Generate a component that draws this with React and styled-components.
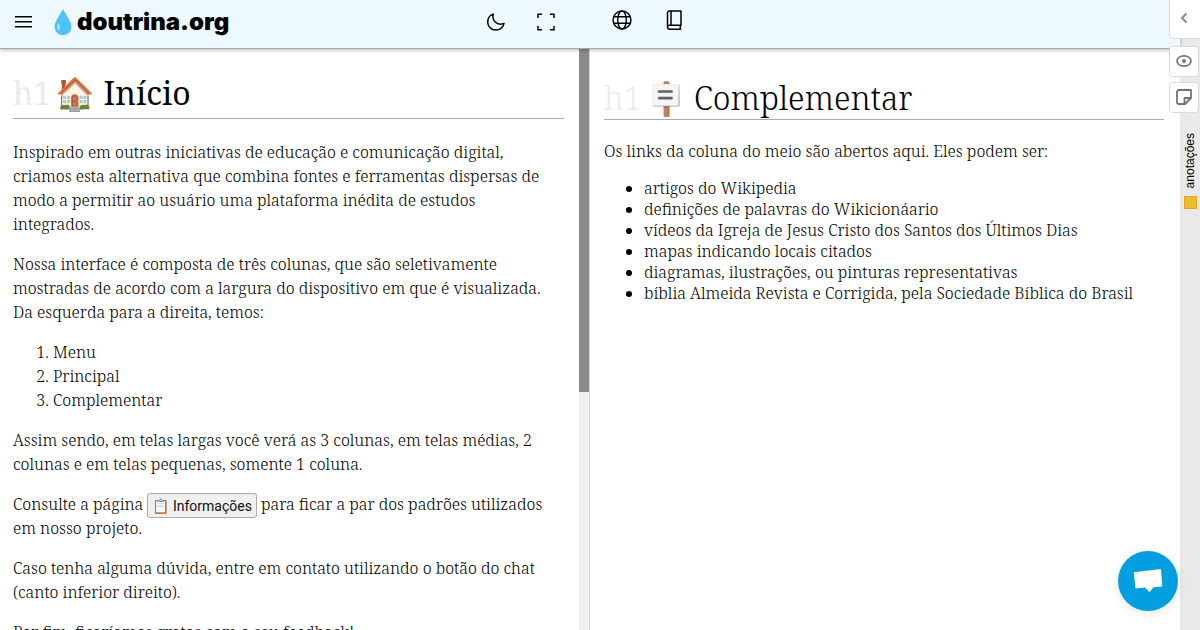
import React from "react";
import styled, { createGlobalStyle } from "styled-components";

const GlobalStyle = createGlobalStyle`
  *, *::before, *::after { box-sizing: border-box; }
  html, body, #root { height: 100%; }
  body {
    margin: 0;
    overflow: hidden;
    background: #fff;
    color: #000;
    font: 300 16px/24px "Roboto Slab", "Noto Serif", "DejaVu Serif Condensed", serif;
  }
`;

const Page = styled.div`
  position: relative;
  display: grid;
  grid-template-columns: minmax(0, 1fr) 20px;
  height: 100%;
`;

const Site = styled.div`
  display: flex;
  flex-direction: column;
  min-height: 0;
`;

const Header = styled.header`
  position: relative;
  z-index: 1;
  display: grid;
  grid-template-columns: 1fr 1fr;
  flex: none;
  height: 49px;
  background: #edf8ff;
  border-bottom: 1px solid #a4aaab;
  box-shadow: 0 1px 4px rgba(0, 0, 0, 0.3);
`;

const MainTools = styled.div`
  display: flex;
  align-items: center;
  gap: 18px;
  padding: 0 34px 4px 15px;
`;

const ViewTools = styled.div`
  display: flex;
  gap: 30px;
`;

const SideTools = styled.div`
  display: flex;
  align-items: center;
  gap: 33px;
  padding: 0 20px 8px 22px;
`;

const IconButton = styled.button`
  display: flex;
  flex: none;
  padding: 0;
  border: 0;
  background: none;
  color: #000;
  cursor: pointer;
`;

const Brand = styled.a`
  display: flex;
  align-items: center;
  margin: 0 auto 0 4px;
  gap: 5px;
  color: #000;
  font: 900 24px/32px Inter, sans-serif;
  text-decoration: none;
`;

const Columns = styled.div`
  display: grid;
  grid-template-columns: 1fr 1fr;
  flex: 1;
  min-height: 0;
`;

const MainColumn = styled.main`
  display: flex;
  min-width: 0;
  min-height: 0;
  border-right: 1px solid #d4d4d4;
`;

const Article = styled.article`
  flex: 1;
  min-width: 0;
  overflow: hidden;
  padding: 18px 15px 0 13px;
`;

const ScrollTrack = styled.div`
  flex: none;
  width: 10px;
  background: #f0f0f0;
`;

const ScrollThumb = styled.div`
  height: 59%;
  background: #8a8a8a;
`;

const SideColumn = styled.section`
  min-width: 0;
  overflow: hidden;
  padding: 18px 16px 0 14px;
  line-height: 21px;
`;

const Heading = styled.h1`
  display: flex;
  align-items: ${(p) => (p.$low ? "flex-end" : "center")};
  gap: 4px;
  height: ${(p) => (p.$low ? 53 : 52)}px;
  margin: 0 0 21px;
  border-bottom: 1px solid #aaa;
  font-size: 32px;
  font-weight: ${(p) => (p.$low ? 300 : 400)};
  line-height: 42px;
`;

const Level = styled.span`
  color: #ebebeb;
`;

const Paragraph = styled.p`
  margin: 0 0 16px;
`;

const NumberedList = styled.ol`
  margin: 0 0 16px;
  padding-left: 40px;
`;

const BulletList = styled.ul`
  margin: 0;
  padding-left: 40px;
`;

const InfoButton = styled.button`
  height: 25px;
  margin: -2px 0;
  padding: 0 4px;
  border: 1px solid #aaa;
  border-radius: 3px;
  background: #f0f0f0;
  color: #111;
  font: 400 14px/20px Roboto, sans-serif;
  vertical-align: middle;
  cursor: pointer;
`;

const NotesRail = styled.aside`
  display: flex;
  flex-direction: column;
  align-items: center;
  gap: 8px;
  padding-top: 133px;
  background: #e9e9e9;
`;

const RailLabel = styled.span`
  writing-mode: vertical-rl;
  transform: rotate(180deg);
  font: 400 12px/18px "Liberation Sans", sans-serif;
`;

const NoteMark = styled.span`
  width: 13px;
  height: 13px;
  border: 1px solid #eaa416;
  background: #ecbd2d;
`;

const NoteTools = styled.div`
  position: absolute;
  top: 0;
  right: 0;
  z-index: 2;
  display: flex;
  flex-direction: column;
  align-items: flex-start;
  width: 31px;
`;

const NoteTool = styled.button`
  display: flex;
  align-items: center;
  justify-content: center;
  width: ${(p) => (p.$tab ? 31 : 30)}px;
  height: ${(p) => (p.$tab ? 39 : 31)}px;
  margin-bottom: ${(p) => (p.$tab ? 7 : 5)}px;
  padding: ${(p) => (p.$tab ? "0 2px 2px 0" : "0 0 1px")};
  border: 1px solid #dbdbdb;
  border-width: ${(p) => (p.$tab ? "0 0 1px 1px" : "1px")};
  border-radius: ${(p) => (p.$tab ? "0 0 0 4px" : "4px")};
  background: #fff;
  color: #737373;
  cursor: pointer;
`;

const ChatButton = styled.button`
  position: absolute;
  right: 22px;
  bottom: 19px;
  z-index: 2;
  display: flex;
  align-items: center;
  justify-content: center;
  width: 60px;
  height: 60px;
  padding: 0;
  border: 0;
  border-radius: 50%;
  background: #039fe0;
  box-shadow: 0 2px 12px rgba(0, 0, 0, 0.1);
  cursor: pointer;
`;

const MenuIcon = () => (
  <svg width="17" height="14" viewBox="0 0 17 14" fill="none" stroke="currentColor" strokeWidth="1.4">
    <path d="M0 1.7h17M0 6.7h17M0 11.7h17" />
  </svg>
);

const DropIcon = () => (
  <svg width="18" height="28" viewBox="0 0 18 28">
    <path d="M9 .8C7.3 5.7.6 12.8.6 18.8.6 23.8 4.3 27.2 9 27.2s8.4-3.4 8.4-8.4C17.4 12.8 10.7 5.7 9 .8Z" fill="#4fc3f7" />
    <path d="M4.2 15.3c-1.7 2.9-1.2 6 .9 7.400 1.400-.8 1.100-5.500-.9-7.400Z" fill="#b3e5fc" />
  </svg>
);

const MoonIcon = () => (
  <svg width="20" height="20" viewBox="0 0 20 20" fill="none" stroke="currentColor" strokeWidth="1.5" strokeLinejoin="round">
    <path d="M7.300 2.100c-1.900 5.700 3.300 12.100 10.800 9.300C17 15.300 13.700 18 9.700 18 5.200 18 1.700 14.500 1.700 10c0-3.500 2.200-6.800 5.600-7.900Z" />
  </svg>
);

const FullscreenIcon = () => (
  <svg width="20" height="20" viewBox="0 0 20 20" fill="none" stroke="currentColor" strokeWidth="1.5">
    <path d="M2 6V2.200h4M14 2.200h4V6M18 14v3.800h-4M6 17.800H2V14" />
  </svg>
);

const GlobeIcon = () => (
  <svg width="20" height="20" viewBox="0 0 20 20" fill="none" stroke="currentColor" strokeWidth="1.4">
    <circle cx="10" cy="10" r="9" />
    <ellipse cx="10" cy="10" rx="4.3" ry="9" />
    <path d="M1.900 6.800h16.200M1.900 13.200h16.200" />
  </svg>
);

const BookIcon = () => (
  <svg width="18" height="20" viewBox="0 0 18 20" fill="none" stroke="currentColor" strokeWidth="1.5" strokeLinejoin="round">
    <path d="M16 15.300H4.500a2 2 0 0 0 0 4H16M2.500 17.300V3a2 2 0 0 1 2-2H16v14.300c-1 1.200-1 2.800 0 4M6 1v14.300" />
  </svg>
);

const ChevronIcon = () => (
  <svg width="8" height="12" viewBox="0 0 8 12" fill="none" stroke="#8b8b8b" strokeWidth="2">
    <path d="M6.500 1.500 2 6l4.500 4.500" />
  </svg>
);

const EyeIcon = () => (
  <svg width="16" height="14" viewBox="0 0 16 14" fill="none" stroke="currentColor" strokeWidth="1.7">
    <path d="M8 1.800c4 0 7 2.400 7 5.200s-3 5.200-7 5.200S1 9.800 1 7s3-5.200 7-5.200Z" />
    <circle cx="8" cy="7" r="1.9" fill="currentColor" stroke="none" />
  </svg>
);

const NoteIcon = () => (
  <svg width="16" height="16" viewBox="0 0 16 16" fill="none" stroke="currentColor" strokeWidth="1.8" strokeLinejoin="round">
    <path d="M15 1H3a2 2 0 0 0-2 2v10a2 2 0 0 0 2 2h6l6-6V1ZM8.500 14.500V9H15" />
  </svg>
);

const ChatIcon = () => (
  <svg width="30" height="26" viewBox="0 0 30 26">
    <path d="M.8 4.200 28 1l1.200 17.400-8.600.8-4.300 5-4.200-4.600-9.600.9Z" fill="#fff" />
  </svg>
);

export default function App() {
  return (
    <>
      <GlobalStyle />
      <Page>
        <Site>
          <Header>
            <MainTools>
              <IconButton aria-label="Menu"><MenuIcon /></IconButton>
              <Brand href="#inicio"><DropIcon />doutrina.org</Brand>
              <ViewTools>
                <IconButton aria-label="Modo noturno"><MoonIcon /></IconButton>
                <IconButton aria-label="Tela cheia"><FullscreenIcon /></IconButton>
              </ViewTools>
            </MainTools>
            <SideTools>
              <IconButton aria-label="Idioma"><GlobeIcon /></IconButton>
              <IconButton aria-label="Livros"><BookIcon /></IconButton>
            </SideTools>
          </Header>
          <Columns>
            <MainColumn>
              <Article id="inicio">
                <Heading><Level>h1</Level><span>🏠 Início</span></Heading>
                <Paragraph>
                  Inspirado em outras iniciativas de educação e comunicação digital, criamos esta alternativa que
                  combina fontes e ferramentas dispersas de modo a permitir ao usuário uma plataforma inédita de
                  estudos<br />integrados.
                </Paragraph>
                <Paragraph>
                  Nossa interface é composta de três colunas, que são seletivamente mostradas de acordo com a largura
                  do dispositivo em que é visualizada. Da esquerda para a direita, temos:
                </Paragraph>
                <NumberedList>
                  <li>Menu</li>
                  <li>Principal</li>
                  <li>Complementar</li>
                </NumberedList>
                <Paragraph>
                  Assim sendo, em telas largas você verá as 3 colunas, em telas médias, 2 colunas e em telas pequenas,
                  somente 1 coluna.
                </Paragraph>
                <Paragraph>
                  Consulte a página <InfoButton>📋 Informações</InfoButton> para ficar a par dos padrões utilizados
                  <br />em nosso projeto.
                </Paragraph>
                <Paragraph>
                  Caso tenha alguma dúvida, entre em contato utilizando o botão do chat (canto inferior direito).
                </Paragraph>
                <Paragraph>Por fim, ficaríamos gratos com o seu feedback!</Paragraph>
              </Article>
              <ScrollTrack><ScrollThumb /></ScrollTrack>
            </MainColumn>
            <SideColumn>
              <Heading $low><Level>h1</Level><span>🪧 Complementar</span></Heading>
              <Paragraph>Os links da coluna do meio são abertos aqui. Eles podem ser:</Paragraph>
              <BulletList>
                <li>artigos do Wikipedia</li>
                <li>definições de palavras do Wikicionáario</li>
                <li>vídeos da Igreja de Jesus Cristo dos Santos dos Últimos Dias</li>
                <li>mapas indicando locais citados</li>
                <li>diagramas, ilustrações, ou pinturas representativas</li>
                <li>bíblia Almeida Revista e Corrigida, pela Sociedade Bíblica do Brasil</li>
              </BulletList>
            </SideColumn>
          </Columns>
        </Site>
        <NotesRail>
          <RailLabel>anotações</RailLabel>
          <NoteMark />
        </NotesRail>
        <NoteTools>
          <NoteTool $tab aria-label="Abrir anotações"><ChevronIcon /></NoteTool>
          <NoteTool aria-label="Mostrar destaques"><EyeIcon /></NoteTool>
          <NoteTool aria-label="Nova nota"><NoteIcon /></NoteTool>
        </NoteTools>
        <ChatButton aria-label="Chat"><ChatIcon /></ChatButton>
      </Page>
    </>
  );
}
